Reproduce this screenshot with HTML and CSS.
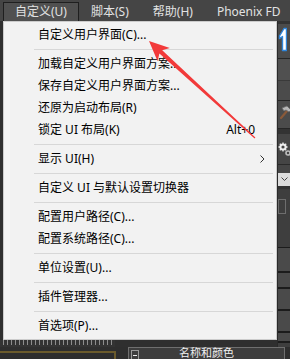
FILE: index.html
```html
<!DOCTYPE html>
<html lang="zh-CN">
<head>
    <meta charset="UTF-8">
    <meta name="viewport" content="width=device-width, initial-scale=1.0">
    <title>自定义菜单</title>
    <link rel="stylesheet" href="styles.css">
</head>
<body>
    <div class="app">
        <nav class="menubar">
            <span class="menubar__item menubar__item--open">自定义(U)</span>
            <span class="menubar__item">脚本(S)</span>
            <span class="menubar__item">帮助(H)</span>
            <span class="menubar__item">Phoenix FD</span>
        </nav>

        <div class="workspace">
            <div class="viewport">
                <div class="ruler"></div>
            </div>
            <aside class="panel">
                <div class="panel__gap"></div>
                <div class="panel__tab panel__tab--create">
                    <svg width="9" height="25" viewBox="0 0 9 25">
                        <path d="M1.5 9 L6 1.5 L8.5 1.5 L8.5 23.5 L4.5 23.5 L4.5 9.5 L1.5 11.5 Z" fill="#ffffff" stroke="#2f86dc" stroke-width="1.4" stroke-linejoin="round"/>
                    </svg>
                </div>
                <div class="panel__tab panel__tab--a"></div>
                <div class="panel__tab panel__tab--b"></div>
                <div class="panel__tab panel__tab--tools">
                    <svg width="13" height="16" viewBox="0 0 13 16">
                        <path d="M3 13 L9 6" stroke="#8a5a3a" stroke-width="2.2" stroke-linecap="round"/>
                        <path d="M4 3 L9 1 L13 5 L11 7 L8 5 L6 6 Z" fill="#b8b8b8" stroke="#6a6a6a" stroke-width="0.8"/>
                    </svg>
                </div>
                <div class="panel__gap panel__gap--tall"></div>
                <div class="panel__row panel__row--gear">
                    <svg width="13" height="14" viewBox="0 0 13 14">
                        <circle cx="5" cy="5" r="2.6" fill="none" stroke="#eeeeee" stroke-width="2"/>
                        <path d="M5 0.5 V2 M5 8 V9.5 M0.5 5 H2 M8 5 H9.5 M1.8 1.8 L2.8 2.8 M7.2 7.2 L8.2 8.2 M8.2 1.8 L7.2 2.8 M2.8 7.2 L1.8 8.2" stroke="#eeeeee" stroke-width="1.3"/>
                        <circle cx="10" cy="11" r="2" fill="none" stroke="#bdbdbd" stroke-width="1.6"/>
                    </svg>
                </div>
                <div class="panel__row panel__row--space"></div>
                <div class="panel__select">
                    <svg width="7" height="5" viewBox="0 0 7 5">
                        <path d="M0.5 0.5 L3.5 3.5 L6.5 0.5" fill="none" stroke="#444" stroke-width="1"/>
                    </svg>
                </div>
                <div class="panel__gap"></div>
                <div class="panel__swatch"><span class="panel__box"></span></div>
                <div class="panel__btn panel__btn--1"></div>
                <div class="panel__btn panel__btn--2"></div>
                <div class="panel__btn panel__btn--3"></div>
                <div class="panel__btn panel__btn--4"></div>
                <div class="panel__btn panel__btn--5"></div>
            </aside>
        </div>

        <div class="bottom">
            <div class="bottom__view"></div>
            <div class="rollout">
                <span class="rollout__toggle" aria-label="折叠"></span>
                <span class="rollout__title">名称和颜色</span>
            </div>
        </div>
    </div>

    <div class="menu" role="menu" aria-label="自定义">
        <div class="menu__item">自定义用户界面(C)...</div>
        <div class="menu__sep"></div>
        <div class="menu__item">加载自定义用户界面方案...</div>
        <div class="menu__item">保存自定义用户界面方案...</div>
        <div class="menu__item">还原为启动布局(R)</div>
        <div class="menu__item"><span class="menu__label">锁定 UI 布局(K)</span><span class="menu__key">Alt+0</span></div>
        <div class="menu__sep"></div>
        <div class="menu__item">
            <span class="menu__label">显示 UI(H)</span>
            <svg class="menu__more" width="5" height="8" viewBox="0 0 5 8">
                <path d="M0.5 0.5 L4 4 L0.5 7.5" fill="none" stroke="#333" stroke-width="1"/>
            </svg>
        </div>
        <div class="menu__sep"></div>
        <div class="menu__item">自定义 UI 与默认设置切换器</div>
        <div class="menu__sep"></div>
        <div class="menu__item">配置用户路径(C)...</div>
        <div class="menu__item">配置系统路径(C)...</div>
        <div class="menu__sep"></div>
        <div class="menu__item">单位设置(U)...</div>
        <div class="menu__sep"></div>
        <div class="menu__item">插件管理器...</div>
        <div class="menu__sep"></div>
        <div class="menu__item">首选项(P)...</div>
    </div>

    <!-- annotation arrow drawn over the screenshot -->
    <svg class="arrow" width="290" height="359" viewBox="0 0 290 359">
        <polygon points="149,41 157.6,61.2 159.4,53.4 254.6,138.6 255.4,137.4 162.2,50.2 169.8,48" fill="#f23a3a"/>
    </svg>
</body>
</html>
```

FILE: styles.css
```css
/* Reset */
* {
    margin: 0;
    padding: 0;
    box-sizing: border-box;
}
body {
    position: relative;
    width: 290px;
    height: 359px;
    overflow: hidden;
    background-color: #3b3b3b;
    font-family: "Segoe UI", "Noto Sans", "Noto Sans CJK SC", sans-serif;
    font-size: 12px;
}
.app {
    display: flex;
    flex-direction: column;
    height: 100%;
}

/* Top menu bar */
.menubar {
    display: flex;
    height: 21px;
    padding: 2px 0 0 3px;
    background-color: #454545;
    color: #e2e2e2;
}
.menubar__item {
    padding: 0 11px;
    line-height: 18px;
    border: 1px solid transparent;
    border-bottom: none;
    white-space: nowrap;
}
.menubar__item--open {
    background-color: #505050;
    border-color: #1f1f1f;
}

/* Workspace behind the menu */
.workspace {
    flex: 1;
    display: flex;
}
.viewport {
    flex: 1;
    display: flex;
    flex-direction: column;
    justify-content: flex-end;
    background-color: #2f2f2f;
}
.ruler {
    width: 115px;
    height: 7px;
    background-color: #333333;
    background-image: repeating-linear-gradient(90deg, #8c8c8c 0, #8c8c8c 1px, transparent 1px, transparent 4px);
    background-size: 100% 5px;
    background-repeat: no-repeat;
    background-position: 3px 0;
}
.panel {
    width: 13px;
    display: flex;
    flex-direction: column;
    background-color: #3e3e3e;
    border-left: 1px solid #2a2a2a;
}
.panel__gap {
    height: 3px;
    background-color: #333333;
}
.panel__gap--tall {
    height: 5px;
}
.panel__tab {
    background-color: #4b4b4b;
    border-bottom: 1px solid #262626;
}
.panel__tab--create {
    height: 35px;
    padding-top: 3px;
}
.panel__tab--create svg {
    display: block;
}
.panel__tab--a {
    height: 22px;
    background-color: #505050;
    border-bottom-color: #3a3a3a;
}
.panel__tab--b {
    height: 20px;
}
.panel__tab--tools {
    height: 28px;
    padding-top: 4px;
}
.panel__tab--tools svg,
.panel__row--gear svg {
    display: block;
}
.panel__row {
    background-color: #454545;
}
.panel__row--gear {
    height: 31px;
    padding-top: 8px;
    border-bottom: 1px solid #2a2a2a;
}
.panel__row--space {
    height: 8px;
}
.panel__select {
    height: 13px;
    display: flex;
    align-items: center;
    padding-left: 3px;
    background-color: #dcdcdc;
}
.panel__swatch {
    height: 59px;
    padding: 10px 0 0 0;
    background-color: #3e3e3e;
    border-bottom: 1px solid #1c1c1c;
}
.panel__box {
    display: block;
    width: 8px;
    height: 15px;
    border: 1px solid #6e6e6e;
}
.panel__btn {
    background-color: #4a4a4a;
    border-bottom: 2px solid #1c1c1c;
}
.panel__btn--1 { height: 25px; }
.panel__btn--2 { height: 16px; }
.panel__btn--3 { height: 22px; }
.panel__btn--4 { height: 22px; }
.panel__btn--5 { height: 10px; }

/* Bottom strip */
.bottom {
    display: flex;
    height: 12px;
    background-color: #2e2e2e;
}
.bottom__view {
    width: 116px;
    margin-top: 4px;
    border-top: 2px solid #6b5b2c;
    border-right: 2px solid #6b5b2c;
}
.rollout {
    display: flex;
    align-items: flex-start;
    width: 157px;
    margin-left: 12px;
    border: 1px solid #6f6f6f;
    border-bottom: none;
    background-color: #3d3d3d;
    color: #f0f0f0;
}
.rollout__toggle {
    display: flex;
    align-items: center;
    justify-content: center;
    width: 8px;
    height: 10px;
    margin: 2px 0 0 2px;
    border: 1px solid #9a9a9a;
    border-bottom: none;
}
.rollout__toggle::before {
    content: "";
    width: 4px;
    height: 1px;
    background-color: #eeeeee;
}
.rollout__title {
    flex: 1;
    padding-right: 10px;
    text-align: center;
    font-size: 11px;
    line-height: 10px;
}

/* Dropdown menu */
.menu {
    position: absolute;
    top: 21px;
    left: 3px;
    width: 274px;
    height: 319px;
    padding: 2px 0;
    background-color: #f2f2f2;
    border: 1px solid #cccccc;
    color: #000000;
}
.menu__item {
    display: flex;
    align-items: center;
    height: 22px;
    padding: 0 11px 0 34px;
    line-height: 22px;
    white-space: nowrap;
}
.menu__label {
    flex: 1;
}
.menu__key {
    margin-right: 10px;
}
.menu__more {
    display: block;
}
.menu__sep {
    height: 1px;
    margin: 3px 3px 3px 30px;
    background-color: #d7d7d7;
}

.arrow {
    position: absolute;
    top: 0;
    left: 0;
    pointer-events: none;
}
```
